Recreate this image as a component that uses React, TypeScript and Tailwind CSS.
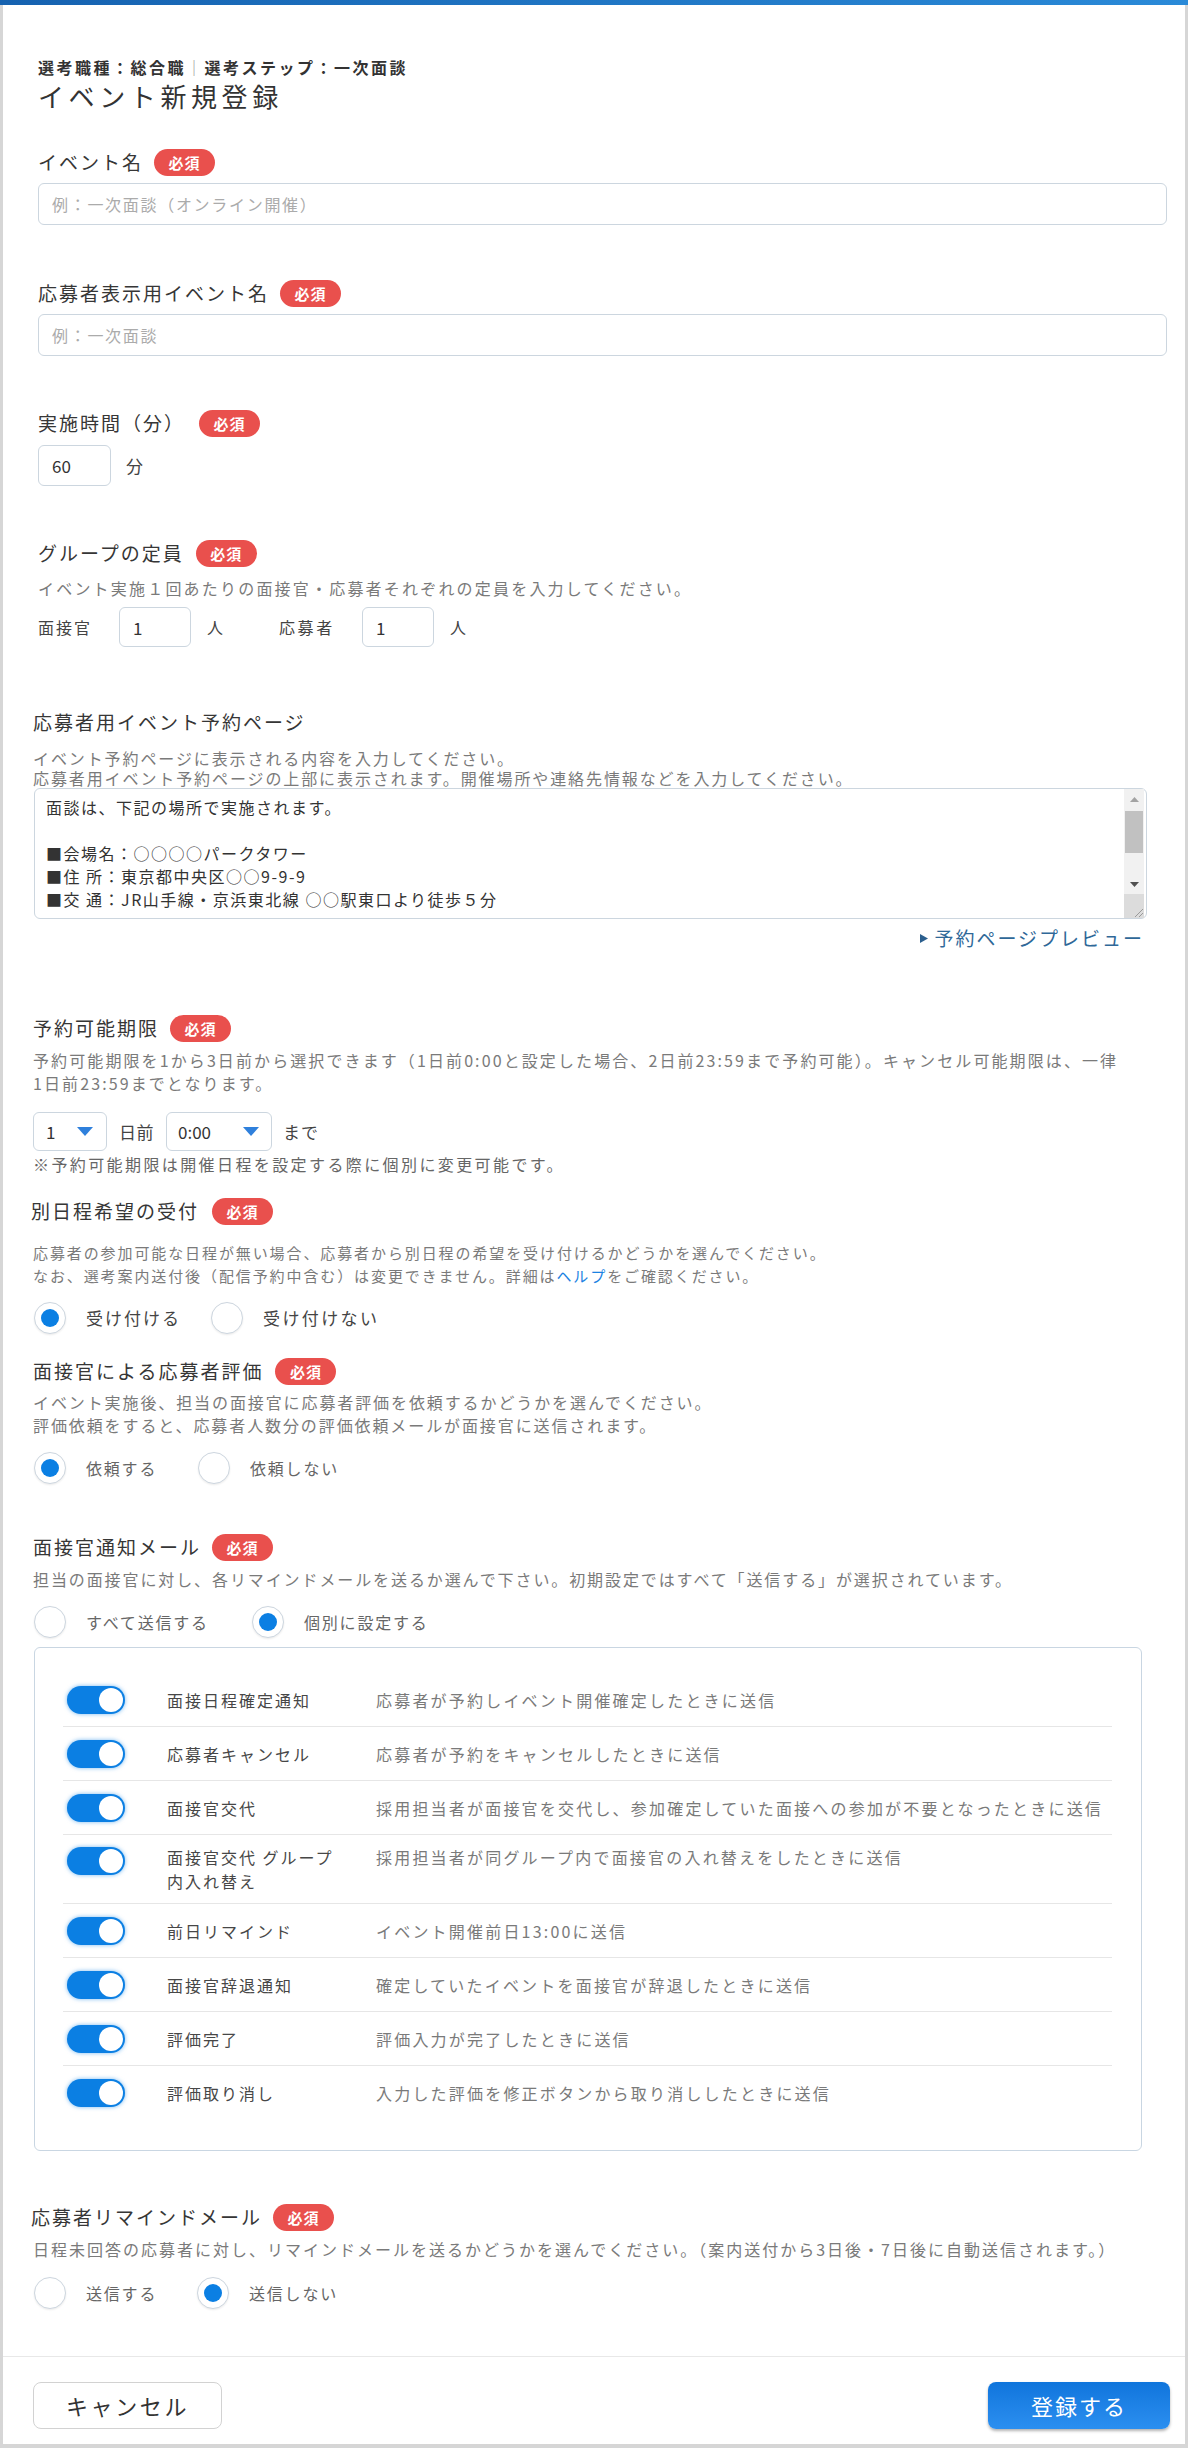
import React from "react";

const Badge = () => (
  <span className="inline-flex h-[27px] w-[61px] items-center justify-center rounded-full bg-[#e9504d] text-[15px] font-bold leading-none tracking-[1px] text-white">
    必須
  </span>
);

function Label({
  children,
  badge = true,
  badgeGap = "ml-[11px]",
  cls = "",
}: {
  children: React.ReactNode;
  badge?: boolean;
  badgeGap?: string;
  cls?: string;
}) {
  return (
    <div className={`flex h-[28px] items-center ${cls}`}>
      <span className="whitespace-nowrap text-[19px] leading-[28px] tracking-[2px] text-[#363636]">
        {children}
      </span>
      {badge && (
        <span className={`flex ${badgeGap}`}>
          <Badge />
        </span>
      )}
    </div>
  );
}

function Radio({
  checked,
  label,
  width,
  labelCls = "text-[16px] tracking-[1.8px] text-[#666]",
}: {
  checked: boolean;
  label: string;
  width?: string;
  labelCls?: string;
}) {
  return (
    <div className={`flex items-center ${width ?? ""}`}>
      <span className="flex h-[32px] w-[32px] shrink-0 items-center justify-center rounded-full border border-[#cdd6df] bg-white shadow-[0_1px_2px_rgba(0,0,0,0.08)]">
        {checked && <span className="h-[18px] w-[18px] rounded-full bg-[#0b7fe3]" />}
      </span>
      <span className={`ml-[20px] whitespace-nowrap leading-[24px] ${labelCls}`}>{label}</span>
    </div>
  );
}

const Toggle = () => (
  <span className="flex h-[28px] w-[58px] shrink-0 items-center justify-end rounded-full bg-[#0b7fe3] p-[2px] shadow-[0_0_4px_rgba(11,127,227,0.55)]">
    <span className="h-[24px] w-[24px] rounded-full bg-white" />
  </span>
);

const Caret = () => (
  <svg width="16" height="9" viewBox="0 0 16 9">
    <polygon points="0,0 16,0 8,9" fill="#2f80dc" />
  </svg>
);

const rows: { label: React.ReactNode; desc: string; tall?: boolean }[] = [
  { label: "面接日程確定通知", desc: "応募者が予約しイベント開催確定したときに送信" },
  { label: "応募者キャンセル", desc: "応募者が予約をキャンセルしたときに送信" },
  { label: "面接官交代", desc: "採用担当者が面接官を交代し、参加確定していた面接への参加が不要となったときに送信" },
  {
    label: (
      <>
        面接官交代 グループ
        <br />
        内入れ替え
      </>
    ),
    desc: "採用担当者が同グループ内で面接官の入れ替えをしたときに送信",
    tall: true,
  },
  { label: "前日リマインド", desc: "イベント開催前日13:00に送信" },
  { label: "面接官辞退通知", desc: "確定していたイベントを面接官が辞退したときに送信" },
  { label: "評価完了", desc: "評価入力が完了したときに送信" },
  { label: "評価取り消し", desc: "入力した評価を修正ボタンから取り消ししたときに送信" },
];

const desc = "whitespace-nowrap text-[16px] tracking-[1.9px] text-[#7a7a7a]";

export default function App() {
  return (
    <div className="w-[1188px] bg-white font-['Noto_Sans_CJK_JP','Noto_Sans',sans-serif] text-[#333]">
      <div className="h-[5px] w-full bg-linear-to-r from-[#1662b0] to-[#2a8ad8]" />
      <div className="flex flex-col border-x-[3px] border-b-[4px] border-[#d6d6d6]">
        <div className="flex flex-col pl-[30px]">
          {/* first group */}
          <div className="flex flex-col pl-[5px]">
            <div className="mt-[52px] whitespace-nowrap text-[16px] font-bold leading-[20px] tracking-[2.5px] text-[#333]">
              選考職種：総合職<span className="font-normal text-[#999]">｜</span>選考ステップ：一次面談
            </div>
            <div className="mt-[2px] whitespace-nowrap text-[26px] leading-[34px] tracking-[4.6px] text-[#333]">
              イベント新規登録
            </div>

            <Label cls="mt-[35px]">イベント名</Label>
            <input
              className="mt-[7px] h-[42px] w-[1129px] rounded-[6px] border border-[#ccd6df] bg-white pl-[13px] text-[16px] tracking-[1.7px] outline-none placeholder:text-[#ababab]"
              placeholder="例：一次面談（オンライン開催）"
            />

            <Label cls="mt-[54px]">応募者表示用イベント名</Label>
            <input
              className="mt-[7px] h-[42px] w-[1129px] rounded-[6px] border border-[#ccd6df] bg-white pl-[13px] text-[16px] tracking-[1.7px] outline-none placeholder:text-[#ababab]"
              placeholder="例：一次面談"
            />

            <Label cls="mt-[53px]" badgeGap="ml-[14px]">
              実施時間（分）
            </Label>
            <div className="mt-[8px] flex h-[41px] items-center">
              <input
                readOnly
                defaultValue="60"
                className="h-[41px] w-[73px] rounded-[6px] border border-[#ccd6df] bg-white pl-[13px] text-[17px] text-[#333] outline-none"
              />
              <span className="ml-[15px] text-[17px] text-[#444]">分</span>
            </div>

            <Label cls="mt-[53px]" badgeGap="ml-[12px]">
              グループの定員
            </Label>
            <div className={`mt-[10px] leading-[22px] ${desc} tracking-[2.2px]`}>
              イベント実施１回あたりの面接官・応募者それぞれの定員を入力してください。
            </div>
            <div className="mt-[8px] flex h-[40px] items-center text-[16px] tracking-[2px] text-[#444]">
              <span className="w-[81px] whitespace-nowrap">面接官</span>
              <input
                readOnly
                defaultValue="1"
                className="h-[40px] w-[72px] rounded-[6px] border border-[#ccd6df] bg-white pl-[13px] text-[17px] text-[#333] outline-none"
              />
              <span className="ml-[16px] w-[72px]">人</span>
              <span className="w-[83px] whitespace-nowrap tracking-[2.6px]">応募者</span>
              <input
                readOnly
                defaultValue="1"
                className="h-[40px] w-[72px] rounded-[6px] border border-[#ccd6df] bg-white pl-[13px] text-[17px] text-[#333] outline-none"
              />
              <span className="ml-[16px]">人</span>
            </div>
          </div>

          {/* booking page */}
          <Label cls="mt-[61px]" badge={false}>
            応募者用イベント予約ページ
          </Label>
          <div className={`mt-[12px] leading-[20px] ${desc}`}>
            <div>イベント予約ページに表示される内容を入力してください。</div>
            <div>応募者用イベント予約ページの上部に表示されます。開催場所や連絡先情報などを入力してください。</div>
          </div>
          <div className="ml-px flex h-[131px] w-[1113px] rounded-[6px] border border-[#ccd6df] bg-white">
            <div className="flex-1 pl-[11px] pt-[7px] text-[16px] leading-[23px] tracking-[1.5px] text-[#333]">
              <div>面談は、下記の場所で実施されます。</div>
              <div>&nbsp;</div>
              <div>■会場名：○○○○パークタワー</div>
              <div>■住 所：東京都中央区○○9-9-9</div>
              <div>■交 通：JR山手線・京浜東北線 ○○駅東口より徒歩５分</div>
            </div>
            <div className="mr-[2px] flex w-[20px] flex-col bg-[#f1f1f1]">
              <div className="flex h-[20px] items-center justify-center">
                <svg width="9" height="5" viewBox="0 0 9 5">
                  <polygon points="0,5 9,5 4.5,0" fill="#a3a3a3" />
                </svg>
              </div>
              <div className="mx-[1px] mt-[2px] h-[42px] bg-[#c1c1c1]" />
              <div className="h-[21px]" />
              <div className="flex h-[20px] items-center justify-center">
                <svg width="9" height="5" viewBox="0 0 9 5">
                  <polygon points="0,0 9,0 4.5,5" fill="#505050" />
                </svg>
              </div>
              <div className="flex flex-1 items-end justify-end bg-[#dcdcdc] pb-[1px] pr-[1px]">
                <svg width="10" height="10" viewBox="0 0 10 10">
                  <line x1="2" y1="10" x2="10" y2="2" stroke="#9a9a9a" strokeWidth="1" />
                  <line x1="6" y1="10" x2="10" y2="6" stroke="#9a9a9a" strokeWidth="1" />
                </svg>
              </div>
            </div>
          </div>
          <div className="mt-[7px] flex w-[1114px] justify-end pr-[3px]">
            <div className="flex h-[24px] items-center text-[19px] tracking-[2px] text-[#2f6898]">
              <svg width="8" height="9" viewBox="0 0 8 9" className="mr-[6px]">
                <polygon points="0,0 8,4.5 0,9" fill="#2b5f8e" />
              </svg>
              予約ページプレビュー
            </div>
          </div>

          {/* booking limit */}
          <Label cls="mt-[64px]">予約可能期限</Label>
          <div className={`mt-[7px] leading-[23px] ${desc} tracking-[2.1px]`}>
            <div>
              予約可能期限を1から3日前から選択できます（1日前0:00と設定した場合、2日前23:59まで予約可能）。キャンセル可能期限は、一律
            </div>
            <div>1日前23:59までとなります。</div>
          </div>
          <div className="mt-[17px] flex h-[39px] items-center text-[17px] text-[#333]">
            <div className="flex h-[39px] w-[74px] items-center rounded-[6px] border border-[#ccd6df] bg-white pl-[12px]">
              <span className="w-[31px]">1</span>
              <Caret />
            </div>
            <span className="ml-[12px] tracking-[0.5px] text-[#444]">日前</span>
            <div className="ml-[12px] flex h-[39px] w-[106px] items-center rounded-[6px] border border-[#ccd6df] bg-white pl-[11px]">
              <span className="w-[65px]">0:00</span>
              <Caret />
            </div>
            <span className="ml-[11px] tracking-[1px] text-[#444]">まで</span>
          </div>
          <div className="mt-[2px] whitespace-nowrap text-[16px] leading-[22px] tracking-[2.4px] text-[#666]">
            ※予約可能期限は開催日程を設定する際に個別に変更可能です。
          </div>

          {/* alt schedule */}
          <Label cls="mt-[22px] -ml-[2px]" badgeGap="ml-[13px]">
            別日程希望の受付
          </Label>
          <div className="mt-[16px] whitespace-nowrap text-[15px] leading-[23px] tracking-[1.9px] text-[#7a7a7a]">
            <div>応募者の参加可能な日程が無い場合、応募者から別日程の希望を受け付けるかどうかを選んでください。</div>
            <div>
              なお、選考案内送付後（配信予約中含む）は変更できません。詳細は
              <span className="text-[#1a82e2]">ヘルプ</span>をご確認ください。
            </div>
          </div>
          <div className="mt-[15px] flex h-[32px] items-center pl-px">
            <Radio
              checked
              label="受け付ける"
              width="w-[177px]"
              labelCls="text-[17px] tracking-[2px] text-[#444]"
            />
            <Radio checked={false} label="受け付けない" labelCls="text-[17px] tracking-[2.4px] text-[#444]" />
          </div>

          {/* evaluation */}
          <Label cls="mt-[23px]" badgeGap="ml-[12px]">
            面接官による応募者評価
          </Label>
          <div className={`mt-[6px] leading-[23px] ${desc}`}>
            <div>イベント実施後、担当の面接官に応募者評価を依頼するかどうかを選んでください。</div>
            <div>評価依頼をすると、応募者人数分の評価依頼メールが面接官に送信されます。</div>
          </div>
          <div className="mt-[15px] flex h-[32px] items-center pl-px">
            <Radio checked label="依頼する" width="w-[164px]" />
            <Radio checked={false} label="依頼しない" />
          </div>

          {/* notification */}
          <Label cls="mt-[49px]" badgeGap="ml-[11px]">
            面接官通知メール
          </Label>
          <div className={`mt-[7px] leading-[23px] ${desc}`}>
            担当の面接官に対し、各リマインドメールを送るか選んで下さい。初期設定ではすべて「送信する」が選択されています。
          </div>
          <div className="mt-[15px] flex h-[32px] items-center pl-px">
            <Radio checked={false} label="すべて送信する" width="w-[218px]" />
            <Radio checked label="個別に設定する" />
          </div>

          <div className="ml-px mt-[9px] flex w-[1108px] flex-col rounded-[6px] border border-[#c9d6e2] bg-white pb-[30px] pl-[28px] pr-[29px] pt-[25px]">
            {rows.map((r, i) => (
              <div
                key={i}
                className={`flex ${
                  r.tall ? "h-[69px] items-start pt-[10px]" : "h-[54px] items-center"
                } ${i < rows.length - 1 ? "border-b border-[#e6e6e6]" : ""}`}
              >
                <div className={`ml-[4px] flex ${r.tall ? "mt-[2px]" : ""}`}>
                  <Toggle />
                </div>
                <div className="ml-[42px] w-[209px] shrink-0 whitespace-nowrap text-[16px] leading-[24px] tracking-[2px] text-[#474747]">
                  {r.label}
                </div>
                <div className="whitespace-nowrap text-[16px] leading-[24px] tracking-[2.2px] text-[#7a7a7a]">
                  {r.desc}
                </div>
              </div>
            ))}
          </div>

          {/* applicant reminder */}
          <Label cls="mt-[52px] -ml-[2px]" badgeGap="ml-[11px]">
            応募者リマインドメール
          </Label>
          <div className={`mt-[7px] leading-[23px] ${desc} tracking-[2px]`}>
            日程未回答の応募者に対し、リマインドメールを送るかどうかを選んでください。（案内送付から3日後・7日後に自動送信されます。）
          </div>
          <div className="mt-[16px] flex h-[32px] items-center pl-px">
            <Radio checked={false} label="送信する" width="w-[163px]" />
            <Radio checked label="送信しない" />
          </div>
        </div>

        {/* footer */}
        <div className="mt-[47px] flex items-center justify-between border-t border-[#e8e8e8] pb-[15px] pl-[30px] pr-[15px] pt-[25px]">
          <button className="flex h-[47px] w-[189px] items-center justify-center rounded-[8px] border border-[#d2d2d2] bg-white text-[22px] tracking-[2.6px] text-[#333]">
            キャンセル
          </button>
          <button className="flex h-[47px] w-[182px] items-center justify-center rounded-[8px] bg-linear-to-b from-[#0f75dc] to-[#2b8ff0] text-[22px] tracking-[2px] text-white shadow-[0_2px_3px_rgba(0,0,0,0.3)]">
            登録する
          </button>
        </div>
      </div>
    </div>
  );
}
